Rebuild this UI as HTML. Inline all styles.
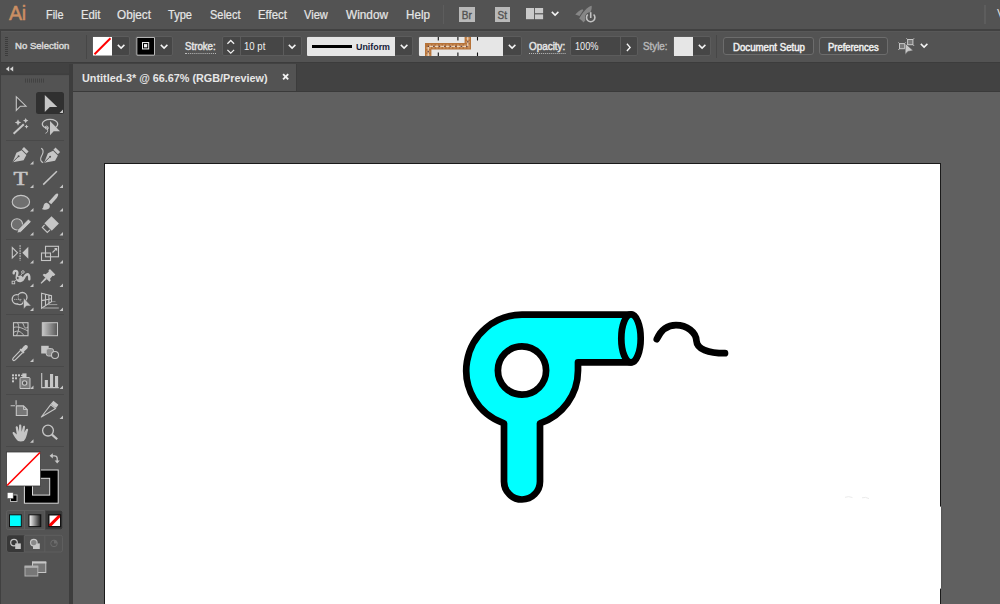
<!DOCTYPE html>
<html><head><meta charset="utf-8"><title>Untitled-3* @ 66.67% (RGB/Preview)</title>
<style>
*{box-sizing:border-box;margin:0;padding:0}
html,body{width:1000px;height:604px;overflow:hidden;background:#606060;font-family:"Liberation Sans",sans-serif;}
#app{position:relative;width:1000px;height:604px;overflow:hidden;background:#606060}
.abs{position:absolute}
#menubar{position:absolute;left:0;top:0;width:1000px;height:29px;background:#535353}
#menubar .mi{position:absolute;top:7.500px;-webkit-text-stroke:0.2px currentColor;font-size:12px;transform-origin:0 50%;color:#e6e6e6;white-space:nowrap;line-height:15px}
#ailogo{position:absolute;left:9px;top:1.400px;font-size:21px;line-height:24px;color:#cb8f63;-webkit-text-stroke:0.55px #cb8f63;letter-spacing:-0.3px;transform-origin:0 0;transform:scaleX(.93)}
#line1{position:absolute;left:0;top:28.700px;width:1000px;height:2.100px;background:#414141}
#ctrl{position:absolute;left:0;top:30.800px;width:1000px;height:31.400px;background:#535353;border-top:1px solid #585858}
#dark2{position:absolute;left:0;top:62px;width:1000px;height:30px;background:#424242;border-top:1.5px solid #3c3c3c}
.ct{position:absolute;font-size:10px;color:#e4e4e4;white-space:nowrap;line-height:12px;transform-origin:0 50%}
.sb{-webkit-text-stroke:0.45px currentColor}
.dd{position:absolute;top:36.300px;height:20px;background:#464646;border:1px solid #5c5c5c;border-radius:2px}
.chev{position:absolute}
#tab{position:absolute;left:72.5px;top:63.5px;width:224.3px;height:27.5px;background:#535353;border-right:0.8px solid #3c3c3c}
#tabtxt{transform-origin:0 50%;position:absolute;left:82px;top:72px;font-size:11px;font-weight:bold;color:#e6e6e6;white-space:nowrap;line-height:13px}
#toolbar{position:absolute;left:0;top:75.300px;width:69px;height:529px;background:#535353}
#toolhead{position:absolute;left:0;top:63.500px;width:69px;height:12px;background:#424242}
#artboard{position:absolute;left:104px;top:163px;width:837px;height:460px;background:#fff;border:1px solid #1a1a1a}
</style></head><body>
<div id="app">
<!-- menubar -->
<div id="menubar">
 <div id="ailogo">Ai</div>
 <span class="mi" style="left:46.2px;transform:scaleX(0.905);">File</span>
 <span class="mi" style="left:80.5px;transform:scaleX(0.943);">Edit</span>
 <span class="mi" style="left:116.7px;transform:scaleX(0.980);">Object</span>
 <span class="mi" style="left:168.0px;transform:scaleX(0.923);">Type</span>
 <span class="mi" style="left:209.5px;transform:scaleX(0.914);">Select</span>
 <span class="mi" style="left:258.0px;transform:scaleX(0.952);">Effect</span>
 <span class="mi" style="left:303.7px;transform:scaleX(0.923);">View</span>
 <span class="mi" style="left:346.0px;transform:scaleX(0.984);">Window</span>
 <span class="mi" style="left:405.5px;transform:scaleX(0.972);">Help</span>

 <div class="abs" style="left:442.800px;top:5px;width:1.600px;height:19px;background:#5d5d5d"></div>
 <div class="abs" style="left:459.100px;top:7.100px;width:16px;height:15.400px;background:#b9b9b9"></div>
 <div class="abs" style="left:461.800px;top:8.700px;font-size:10px;line-height:13px;color:#535353;-webkit-text-stroke:0.35px #535353">Br</div>
 <div class="abs" style="left:494.500px;top:7.100px;width:15.800px;height:15.400px;background:#b9b9b9"></div>
 <div class="abs" style="left:497.500px;top:8.700px;font-size:10px;line-height:13px;color:#535353;-webkit-text-stroke:0.35px #535353">St</div>
 <svg class="abs" style="left:525.900px;top:7.700px" width="18" height="12"><rect x="0" y="0" width="8.100" height="11.200" fill="#cacaca"/><rect x="9" y="0" width="8.100" height="5.200" fill="#cacaca"/><rect x="9" y="6.400" width="8.100" height="4.800" fill="#cacaca"/></svg>
 <svg class="abs" style="left:550.700px;top:10.600px" width="9" height="6"><path d="M0.800 0.900 L4.100 4.100 L7.400 0.900" fill="none" stroke="#f4f4f4" stroke-width="1.500"/></svg>
 <svg class="abs" style="left:574px;top:4px" width="24" height="20" viewBox="0 0 24 20"><path d="M17.700 1.700 C13.500 2.800 8.500 8 5.200 14.600 L9.300 17.800 C14 13.500 18.300 7.500 17.700 1.700 Z" fill="#868686"/><path d="M1.300 10.600 C3.500 7.800 6 6 8.500 5.200 L9.300 6.200 L5.500 12 Z" fill="#868686"/><path d="M8.300 15.800 L9 18.600 L11.800 16.200 Z" fill="#868686"/><circle cx="16.700" cy="13.600" r="5.700" fill="#535353"/><path d="M13.800 10.500 A4.200 4.200 0 1 0 19.600 10.500" fill="none" stroke="#c2c2c2" stroke-width="1.600"/><line x1="16.700" y1="8.200" x2="16.700" y2="14" stroke="#c2c2c2" stroke-width="1.600"/></svg>
 <div class="abs" style="left:984.400px;top:5px;width:1.600px;height:19px;background:#5d5d5d"></div>
 <div class="abs" style="left:997px;top:7px;font-size:12px;line-height:15px;color:#dedede">V</div>
</div>
<div id="line1"></div>
<div id="ctrl"></div>

<!-- control bar contents -->
<svg class="abs" style="left:5px;top:37px" width="4" height="19"><g fill="#3c3c3c"><rect x="0" y="0" width="3" height="1"/><rect x="0" y="2" width="3" height="1"/><rect x="0" y="4" width="3" height="1"/><rect x="0" y="6" width="3" height="1"/><rect x="0" y="8" width="3" height="1"/><rect x="0" y="10" width="3" height="1"/><rect x="0" y="12" width="3" height="1"/><rect x="0" y="14" width="3" height="1"/><rect x="0" y="16" width="3" height="1"/><rect x="0" y="18" width="3" height="1"/></g></svg>
<div class="ct sb" style="left:14.6px;transform:scaleX(1.008);top:40px;color:#d8d8d8;font-weight:normal;font-size:9.500px">No Selection</div>
<div class="abs" style="left:85.500px;top:34.500px;width:1px;height:24px;background:#474747"></div>
<!-- fill swatch -->
<div class="dd" style="left:92px;width:38px"></div>
<svg class="abs" style="left:93px;top:37.300px" width="19" height="18.500" viewBox="0 0 19 18" preserveAspectRatio="none"><rect width="19" height="18" fill="#fff"/><line x1="1.500" y1="16.700" x2="17.500" y2="1.300" stroke="#ff0000" stroke-width="2"/></svg>
<svg class="chev" style="left:116.5px;top:44.200px" width="9" height="6"><path d="M0.800 0.900 L4.100 4.100 L7.400 0.900" fill="none" stroke="#f4f4f4" stroke-width="1.500"/></svg>
<!-- stroke swatch -->
<div class="dd" style="left:135px;width:38px"></div>
<svg class="abs" style="left:136px;top:37.300px" width="19" height="18.500" viewBox="0 0 19 18" preserveAspectRatio="none"><rect x="0.500" y="0" width="18.300" height="18" rx="1" fill="#d8d8d8"/><rect x="1.300" y="0.800" width="16.700" height="16.400" fill="#000"/><rect x="6.500" y="5.400" width="6.200" height="6.200" fill="none" stroke="#f0f0f0" stroke-width="1"/><rect x="8" y="6.900" width="3.200" height="3.200" fill="#f0f0f0"/></svg>
<svg class="chev" style="left:159.7px;top:44.200px" width="9" height="6"><path d="M0.800 0.900 L4.100 4.100 L7.400 0.900" fill="none" stroke="#f4f4f4" stroke-width="1.500"/></svg>
<div class="ct sb" style="left:185.0px;transform:scaleX(0.969);top:40.900px;border-bottom:1px dotted #bdbdbd;padding-bottom:0.300px">Stroke:</div>
<!-- stroke weight -->
<div class="dd" style="left:222px;width:80px"></div>
<div class="abs" style="left:240px;top:37.300px;width:1px;height:18px;background:#5c5c5c"></div>
<div class="abs" style="left:283px;top:37.300px;width:1px;height:18px;background:#5c5c5c"></div>
<svg class="abs" style="left:226px;top:39px" width="10" height="16"><path d="M1.400 4.700 L4.750 1.500 L8.100 4.700 M1.400 10.900 L4.750 14.100 L8.100 10.900" fill="none" stroke="#f0f0f0" stroke-width="1.300"/></svg>
<div class="ct" style="left:243.7px;transform:scaleX(0.957);top:40.900px;font-weight:normal;color:#f0f0f0">10 pt</div>
<svg class="chev" style="left:287.7px;top:44.200px" width="9" height="6"><path d="M0.800 0.900 L4.100 4.100 L7.400 0.900" fill="none" stroke="#f4f4f4" stroke-width="1.500"/></svg>
<!-- width profile -->
<div class="dd" style="left:307px;width:106px"></div>
<div class="abs" style="left:307px;top:37px;width:88px;height:19px;background:#e6e6e6;border-radius:1px 0 0 1px"></div>
<div class="abs" style="left:312.200px;top:45px;width:39.500px;height:3px;background:#000"></div>
<div class="ct" style="left:355.5px;transform:scaleX(0.986);top:40.900px;color:#161a38;font-weight:bold;font-size:9px">Uniform</div>
<svg class="chev" style="left:399.7px;top:44.200px" width="9" height="6"><path d="M0.800 0.900 L4.100 4.100 L7.400 0.900" fill="none" stroke="#f4f4f4" stroke-width="1.500"/></svg>
<!-- brush -->
<div class="dd" style="left:418px;width:104px"></div>
<div class="abs" style="left:419px;top:37px;width:84px;height:19px;background:#e6e6e6;border-radius:1px 0 0 1px"></div>
<svg class="abs" style="left:419px;top:37px" width="84" height="19"><path d="M9.200 19 V9.300 H48.800 V0" fill="none" stroke="#b57238" stroke-width="6.400"/><path d="M9.200 19 V9.300 H48.800 V0" fill="none" stroke="#c98f5c" stroke-width="4.200" stroke-dasharray="2 1.500"/><path d="M9.200 19 V9.300 H48.800 V0" fill="none" stroke="#f4e6d4" stroke-width="1" stroke-dasharray="3.500 2"/><path d="M9.200 19 V9.300 H48.800 V0" fill="none" stroke="#2a2350" stroke-width="1" stroke-dasharray="1 4.500" stroke-dashoffset="-3.800"/><g stroke="#111" stroke-width="1.100"><path d="M19.300 0 V3.500 M38.900 0 V3.500 M58.500 0 V3.500 M19.300 15.500 V19 M38.900 15.500 V19 M58.500 15.500 V19"/></g></svg>
<svg class="chev" style="left:508.4px;top:44.200px" width="9" height="6"><path d="M0.800 0.900 L4.100 4.100 L7.400 0.900" fill="none" stroke="#f4f4f4" stroke-width="1.500"/></svg>
<!-- opacity -->
<div class="ct sb" style="left:528.7px;transform:scaleX(0.989);top:40.900px;border-bottom:1px dotted #bdbdbd;padding-bottom:0.300px">Opacity:</div>
<div class="dd" style="left:570px;width:68px"></div>
<div class="abs" style="left:620px;top:37.300px;width:1px;height:18px;background:#5c5c5c"></div>
<div class="ct" style="left:574.5px;transform:scaleX(0.919);top:40.900px;font-weight:normal;color:#f0f0f0">100%</div>
<svg class="abs" style="left:626px;top:42.500px" width="6" height="10"><path d="M0.900 0.800 L4.100 4.400 L0.900 8" fill="none" stroke="#f4f4f4" stroke-width="1.400"/></svg>
<div class="ct sb" style="left:643.0px;transform:scaleX(0.979);top:41.300px;color:#b6b6b6">Style:</div>
<div class="dd" style="left:673px;width:38px"></div>
<div class="abs" style="left:674px;top:37.200px;width:18.600px;height:18.600px;background:#e6e6e6"></div>
<svg class="chev" style="left:697.7px;top:44.200px" width="9" height="6"><path d="M0.800 0.900 L4.100 4.100 L7.400 0.900" fill="none" stroke="#f4f4f4" stroke-width="1.500"/></svg>
<div class="abs" style="left:716px;top:35px;width:1px;height:23px;background:#474747"></div>
<div class="dd" style="left:723.300px;width:90.500px;top:37.200px;height:18.200px;border-radius:3px;background:#4c4c4c;border-color:#6c6c6c"></div>
<div class="ct sb" style="left:732.5px;transform:scaleX(0.966);top:41.700px;color:#f0f0f0">Document Setup</div>
<div class="dd" style="left:819.400px;width:68.500px;top:37.200px;height:18.200px;border-radius:3px;background:#4c4c4c;border-color:#6c6c6c"></div>
<div class="ct sb" style="left:828.0px;transform:scaleX(0.940);top:41.700px;color:#f0f0f0">Preferences</div>
<svg class="abs" style="left:898px;top:37px" width="18" height="19"><g stroke="#c8c8c8" stroke-width="1" fill="#787878"><rect x="1.500" y="6.600" width="5" height="5.100"/><rect x="9.600" y="2.500" width="5.300" height="5.200"/></g><path d="M1.500 6.600 l-1.200 -1.200 M6.500 6.600 l1.200 -1.200 M1.500 11.700 l-1.200 1.200 M9.600 2.500 l-1.200 -1.200 M14.900 2.500 l1.200 -1.200 M14.900 7.700 l1.200 1.200 M9.600 7.700 l-1.200 1.200" stroke="#c8c8c8" stroke-width="0.900" fill="none"/><path d="M7.200 6.400 V17.400 L9.900 14.400 L15.100 13.600 Z" fill="#c8c8c8" stroke="#535353" stroke-width="0.500"/></svg>
<svg class="chev" style="left:919.7px;top:43.200px" width="9" height="6"><path d="M0.800 0.900 L4.100 4.100 L7.400 0.900" fill="none" stroke="#f4f4f4" stroke-width="1.500"/></svg>
<div id="dark2"></div>
<div id="tab"></div>
<div id="tabtxt" style="left:81.6px;transform:scaleX(0.984);">Untitled-3* @ 66.67% (RGB/Preview)</div>
<svg class="abs" style="left:282.100px;top:73px" width="8" height="8"><path d="M1.100 1.100 L6.200 6.300 M6.200 1.100 L1.100 6.300" stroke="#f2f2f2" stroke-width="1.900" fill="none"/></svg>
<div class="abs" style="left:72px;top:91px;width:928px;height:1.200px;background:#3a3a3a"></div>
<div class="abs" style="left:69px;top:63.500px;width:3.500px;height:541px;background:#3d3d3d"></div>
<div id="toolhead"></div>
<div id="toolbar"></div>
<!--TB-->
<svg class="abs" style="left:0;top:0" width="72" height="604" viewBox="0 0 72 604">
<defs>
<linearGradient id="gr1" x1="0" x2="1" y1="0" y2="0"><stop offset="0" stop-color="#c8c8c8"/><stop offset="1" stop-color="#565656"/></linearGradient>
<linearGradient id="gr2" x1="0" x2="1" y1="0" y2="0"><stop offset="0" stop-color="#ffffff"/><stop offset="1" stop-color="#1a1a1a"/></linearGradient>
<path id="tri" d="M3.500 0 V3.500 H0 Z" fill="#c6c6c6"/>
</defs>
<!-- header arrows -->
<path d="M9.200 66.200 L5.800 68.900 L9.200 71.600 Z M13.200 66.200 L9.800 68.900 L13.200 71.600 Z" fill="#d4d4d4"/>
<rect x="0" y="73.800" width="69" height="1.300" fill="#3f3f3f"/><rect x="0" y="30.500" width="1" height="574" fill="#404040"/>
<!-- grip -->
<g fill="#424242"><rect x="25" y="78.600" width="1" height="4"/><rect x="27" y="78.600" width="1" height="4"/><rect x="29" y="78.600" width="1" height="4"/><rect x="31" y="78.600" width="1" height="4"/><rect x="33" y="78.600" width="1" height="4"/><rect x="35" y="78.600" width="1" height="4"/><rect x="37" y="78.600" width="1" height="4"/><rect x="39" y="78.600" width="1" height="4"/><rect x="41" y="78.600" width="1" height="4"/><rect x="43" y="78.600" width="1" height="4"/></g>
<!-- separators -->
<g fill="#494949"><rect x="6" y="140" width="58" height="1"/><rect x="6" y="239" width="58" height="1"/><rect x="6" y="314" width="58" height="1"/><rect x="6" y="366" width="58" height="1"/><rect x="6" y="394" width="58" height="1"/><rect x="6" y="446" width="58" height="1"/></g>
<!-- selected tool bg -->
<rect x="36" y="92" width="28" height="22" rx="2.500" fill="#303030"/>
<!-- direct selection -->
<path d="M16.300 96.700 V110.300 L20.400 106.200 H26 Z" fill="#484848" stroke="#c6c6c6" stroke-width="1.100" stroke-linejoin="miter"/>
<!-- selection -->
<path d="M44.800 95 V112 L49.800 107 H57.300 Z" fill="#c6c6c6"/>
<use href="#tri" x="59.500" y="109.500"/>
<!-- magic wand -->
<line x1="13.600" y1="133.800" x2="23.800" y2="124.300" stroke="#c6c6c6" stroke-width="2"/>
<path d="M18 119.300 L19 121.500 L21.200 122.500 L19 123.500 L18 125.700 L17 123.500 L14.800 122.500 L17 121.500 Z" fill="#c6c6c6"/>
<path d="M25.700 117.900 L26.600 119.700 L28.400 120.600 L26.600 121.500 L25.700 123.300 L24.800 121.500 L23 120.600 L24.800 119.700 Z" fill="#c6c6c6"/>
<path d="M26.500 124.500 L27.200 125.900 L28.600 126.600 L27.200 127.300 L26.500 128.700 L25.800 127.300 L24.400 126.600 L25.800 125.900 Z" fill="#c6c6c6"/>
<!-- lasso -->
<path d="M48.500 128.300 C44.500 127.900 42.300 126.200 42.300 124.100 C42.300 121.300 45.700 119.400 50 119.400 C54.300 119.400 57.700 121.300 57.700 124.100 C57.700 125.500 57 126.500 55.800 127.300" fill="none" stroke="#c6c6c6" stroke-width="1.300"/>
<circle cx="46.600" cy="127.600" r="1.500" fill="none" stroke="#c6c6c6" stroke-width="1"/>
<path d="M47.500 129 C48 131 47.500 132.500 45.500 133.300" fill="none" stroke="#c6c6c6" stroke-width="1"/>
<path d="M50 121 V135.200 L53.700 131.200 H60 Z" fill="#c6c6c6"/>
<!-- pen -->
<g id="pen"><path d="M12.600 162.200 L16.400 152.800 L21.600 150.300 L26.400 155.100 L23.600 160.300 Z" fill="#c6c6c6"/><path d="M21.900 149.300 L24 147 L28.600 151.600 L26.400 153.800 Z" fill="#c6c6c6"/><path d="M12.900 161.900 L18.300 156.500" stroke="#535353" stroke-width="1" fill="none"/><circle cx="18.600" cy="156.200" r="1" fill="#535353"/></g>
<use href="#tri" x="30" y="161"/>
<!-- curvature pen -->
<use href="#pen" x="31.500" y="0.500"/>
<path d="M41.200 148.200 C44.500 150 42.800 154 41.300 156.500 C40 159 40.500 162 43.200 162.600" fill="none" stroke="#c6c6c6" stroke-width="1.100"/>
<!-- T -->
<text transform="translate(20.700 184.900) scale(1.220 1)" x="0" y="0" font-family="Liberation Serif, serif" font-size="19" fill="#c6c6c6" text-anchor="middle" stroke="#c6c6c6" stroke-width="0.600">T</text>
<use href="#tri" x="30" y="184.500"/>
<!-- line -->
<line x1="43.200" y1="184.600" x2="56.900" y2="171.200" stroke="#c6c6c6" stroke-width="1.500"/>
<use href="#tri" x="59.500" y="184.500"/>
<!-- ellipse -->
<ellipse cx="20.900" cy="201.900" rx="8.700" ry="6.500" fill="#707070" stroke="#c6c6c6" stroke-width="1.100"/>
<use href="#tri" x="30" y="208"/>
<!-- brush -->
<path d="M48.600 202 L55.300 194.600 C56.500 193.400 58 193.300 58.200 194.300 C58.400 195.300 57.500 196.800 56.800 198 L51.200 204.300 Z" fill="#c6c6c6"/>
<path d="M47.200 202.900 C49 203.500 50.200 205.200 49.800 207 C49.300 209 47 209.900 44.500 209.700 C43.500 209.600 42.500 209.400 41.900 209.100 C43.300 208.400 43.200 207 43.600 205.600 C44 203.800 45.500 202.500 47.200 202.900 Z" fill="#c6c6c6"/>
<use href="#tri" x="59.500" y="208"/>
<!-- shaper -->
<circle cx="17" cy="224.400" r="5.600" fill="#707070" stroke="#c6c6c6" stroke-width="1.100"/>
<path d="M17 233 L18 229.400 L28.400 219 L31.200 221.800 L20.800 232.200 Z" fill="#c6c6c6" stroke="#535353" stroke-width="0.700"/>
<use href="#tri" x="30" y="232"/>
<!-- eraser -->
<path d="M51.500 216.200 L58.900 223.600 L51.800 230.700 L44.400 223.300 Z" fill="#c6c6c6"/>
<path d="M44.600 225 L42.300 227.400 L47.300 232.500 L50 229.800" fill="none" stroke="#c6c6c6" stroke-width="1.100"/>
<use href="#tri" x="59.500" y="232"/>
<!-- reflect -->
<path d="M12.300 247.600 V258 L17.500 252.800 Z" fill="none" stroke="#c6c6c6" stroke-width="1.100"/>
<path d="M28.300 246.800 V258.800 L22.300 252.800 Z" fill="#c6c6c6"/>
<line x1="20.100" y1="245.300" x2="20.100" y2="260.800" stroke="#c6c6c6" stroke-width="1.200" stroke-dasharray="1.500 1"/>
<use href="#tri" x="30" y="260"/>
<!-- scale -->
<rect x="45.500" y="246.300" width="13" height="10.500" fill="none" stroke="#c6c6c6" stroke-width="1.100"/>
<rect x="41.500" y="253" width="9" height="7.500" fill="none" stroke="#c6c6c6" stroke-width="1.100"/>
<path d="M52.500 252.500 L56.500 248.500" stroke="#c6c6c6" stroke-width="1.100"/><path d="M54 248 H57.200 V251.200 Z" fill="#c6c6c6"/>
<use href="#tri" x="59.500" y="260"/>
<!-- puppet warp -->
<path d="M13.700 273.400 C13.300 270.300 17.600 269.900 17.400 273 C17.200 275.600 15.800 277.600 17.300 279.800 C19.300 282.300 22.600 281 23.900 278 C25 275.300 27.400 273.300 28.700 275 C29.700 276.400 29.300 278 29.300 279.300" fill="none" stroke="#c6c6c6" stroke-width="2.400" stroke-linecap="round" stroke-linejoin="round"/>
<ellipse cx="19.800" cy="278.600" rx="3.400" ry="2.900" transform="rotate(-30 19.800 278.600)" fill="#c6c6c6"/>
<path d="M20.900 275.500 L22.600 272.600" stroke="#c6c6c6" stroke-width="0.800"/>
<circle cx="17.800" cy="278" r="1.500" fill="#535353" stroke="#c6c6c6" stroke-width="0.800"/>
<circle cx="22.900" cy="272" r="1.300" fill="#535353" stroke="#c6c6c6" stroke-width="0.900"/>
<path d="M14.500 281.500 L16.500 279.500" stroke="#c6c6c6" stroke-width="0.700"/>
<rect x="12.100" y="281.200" width="2.600" height="2.600" fill="#535353" stroke="#c6c6c6" stroke-width="0.900"/>
<use href="#tri" x="30" y="283.500"/>
<!-- pin -->
<g transform="translate(52.500 271.900) rotate(45)" fill="#c6c6c6"><path d="M-3.800 -0.200 H3.800 V1.900 L2.700 2.600 L3.100 6.600 L4.800 7.300 V9.100 H-4.800 V7.300 L-3.100 6.600 L-2.700 2.600 L-3.800 1.900 Z"/><path d="M-1.100 9 H1.100 L0.600 16.300 H-0.600 Z"/></g>
<use href="#tri" x="59.500" y="283.500"/>
<!-- shape builder -->
<g fill="none" stroke="#c6c6c6" stroke-width="2.500"><ellipse cx="16.700" cy="299.300" rx="3.900" ry="4.100"/><circle cx="22.300" cy="297.200" r="4.100"/><circle cx="19.800" cy="300.800" r="3.200"/></g>
<g fill="#535353"><ellipse cx="16.700" cy="299.300" rx="3.800" ry="4"/><circle cx="22.300" cy="297.200" r="4"/><circle cx="19.800" cy="300.800" r="3.100"/></g>
<path d="M18.600 295.600 A4.100 4.100 0 0 0 21.200 301.200" fill="none" stroke="#9a9a9a" stroke-width="0.800"/>
<line x1="14.300" y1="299.400" x2="21.500" y2="299.400" stroke="#c6c6c6" stroke-width="1" stroke-dasharray="1 1"/>
<path d="M23.500 297.800 V309.200 L26.500 306 H31.300 Z" fill="#c6c6c6" stroke="#535353" stroke-width="0.600"/>
<use href="#tri" x="30" y="307.500"/>
<!-- perspective grid -->
<path d="M41.600 293.200 L51.500 295.600 V301.800 L41.600 308.300 Z M41.600 300.600 L51.500 298.800 M45.500 294.200 V305.800 M48.900 295 V303.500" fill="none" stroke="#c6c6c6" stroke-width="1.100"/>
<path d="M52 301.600 H55.500" stroke="#8a8a8a" stroke-width="1"/><path d="M48 304.600 H57.300" stroke="#9c9c9c" stroke-width="1"/><path d="M42.500 308 H58.800" stroke="#b0b0b0" stroke-width="1"/>
<use href="#tri" x="59.500" y="307.500"/>
<!-- mesh -->
<rect x="13.500" y="322.700" width="14.500" height="13" fill="none" stroke="#c6c6c6" stroke-width="1.100"/>
<path d="M13.500 327.500 C18 326 22 328 28 331 M13.500 332.500 C17 330 21 331 24 335.700 M17.500 322.700 C19.500 326 19 330 16.500 335.700 M22.500 322.700 C24.500 326 24 330 28 327" fill="none" stroke="#c6c6c6" stroke-width="0.900"/>
<!-- gradient -->
<rect x="42.300" y="322.700" width="15.200" height="13" fill="url(#gr1)" stroke="#c6c6c6" stroke-width="1"/>
<!-- eyedropper -->
<path d="M20.500 350.300 L13.300 357.800 C12.500 358.800 12.600 359.800 13 360.200 C13.500 360.700 14.500 360.700 15.300 359.900 L22.700 352.500" fill="none" stroke="#c6c6c6" stroke-width="1.200"/>
<path d="M19.500 349.800 L20.800 348.500 L21.500 349 L23.500 346.500 C24.500 345 26.300 344.500 27.300 345.500 C28.300 346.500 27.800 348.300 26.500 349.300 L24 351.500 L24.600 352.300 L23.300 353.600 Z" fill="#c6c6c6"/>
<use href="#tri" x="30" y="358.500"/>
<!-- blend -->
<rect x="41.200" y="345.800" width="7.500" height="7.700" fill="#c6c6c6"/>
<rect x="46.200" y="348.600" width="7.400" height="7.400" rx="2.200" fill="#8a8a8a" stroke="#c6c6c6" stroke-width="1"/>
<circle cx="55" cy="355" r="3.500" fill="#535353" stroke="#c6c6c6" stroke-width="1.100"/>
<!-- symbol sprayer -->
<g fill="#c6c6c6"><rect x="12" y="374.300" width="2" height="2"/><rect x="15" y="374.300" width="2" height="2"/><rect x="18" y="374.300" width="2" height="2"/><rect x="12" y="377.300" width="2" height="2"/><rect x="15" y="377.300" width="2" height="2"/><rect x="12" y="380.300" width="2" height="2"/></g>
<path d="M21 377.500 H29 C29.600 377.500 30 378 30 378.500 V388.500 H20 V378.500 C20 378 20.400 377.500 21 377.500 Z" fill="#7a7a7a" stroke="#c6c6c6" stroke-width="1"/>
<rect x="22.300" y="373.400" width="4.200" height="4" fill="#c6c6c6"/><rect x="21" y="374.800" width="2" height="1.300" fill="#c6c6c6"/>
<circle cx="24.600" cy="383" r="2.200" fill="#535353" stroke="#c6c6c6" stroke-width="1.100"/>
<use href="#tri" x="30" y="385.500"/>
<!-- graph -->
<path d="M41.700 373 V387.600 H58.800" fill="none" stroke="#c6c6c6" stroke-width="1.100"/>
<rect x="44.800" y="380" width="3.100" height="7" fill="#c6c6c6"/><rect x="50" y="374" width="3.100" height="13" fill="#c6c6c6"/><rect x="55" y="376" width="3.100" height="11" fill="#c6c6c6"/>
<use href="#tri" x="59.500" y="385.500"/>
<!-- artboard -->
<path d="M16.100 400.300 V404.800 M10.600 405.800 H15" stroke="#c6c6c6" stroke-width="1.100" fill="none"/>
<path d="M16.300 405.900 H23.500 L27.200 409.500 V415.500 H16.300 Z" fill="#777" stroke="#c6c6c6" stroke-width="1.100"/>
<path d="M23.500 405.900 V409.500 H27.200" fill="none" stroke="#c6c6c6" stroke-width="0.900"/>
<!-- slice -->
<path d="M41.300 417 L50.700 404.700 L55.700 408.600 Z" fill="#565656" stroke="#c6c6c6" stroke-width="1.100" stroke-linejoin="round"/>
<path d="M50.600 403.900 L53.400 400.700 L58.400 404.700 L56 408 Z" fill="#c6c6c6"/>
<use href="#tri" x="59.500" y="415.500"/>
<!-- hand -->
<path d="M18 441 C16 439.500 14.300 436.500 12.700 433.600 C12.100 432.500 13.400 431.600 14.500 432.400 L16.800 434.500 L15.700 427.400 C15.600 426 17.500 425.700 17.800 427 L18.900 431.800 L19.100 425.600 C19.100 424.200 21.200 424.200 21.300 425.600 L21.600 431.800 L23 426.600 C23.400 425.300 25.200 425.700 25 427 L24.300 432.600 L26.100 429.300 C26.800 428.100 28.500 428.900 28.100 430.100 C27 433.500 26.800 438 23.800 441 C22 441.500 19.500 441.500 18 441 Z" fill="#c6c6c6"/>
<use href="#tri" x="30" y="439.300"/>
<!-- zoom -->
<circle cx="48" cy="430.600" r="5.400" fill="none" stroke="#c6c6c6" stroke-width="1.300"/>
<line x1="52" y1="434.600" x2="57.200" y2="439.300" stroke="#c6c6c6" stroke-width="2.200"/>
<!-- fill/stroke -->
<rect x="24.400" y="470" width="33.800" height="33.200" fill="#000" stroke="#dcdcdc" stroke-width="1"/>
<rect x="32.500" y="478.300" width="17.200" height="16.800" fill="#535353" stroke="#dcdcdc" stroke-width="1"/>
<rect x="6.500" y="452" width="34" height="34" fill="#fff" stroke="#3a3a3a" stroke-width="0.800"/>
<line x1="7" y1="485.500" x2="40" y2="452.500" stroke="#f00" stroke-width="1.600"/>
<!-- swap -->
<path d="M52 455.800 H54.500 C56.300 455.800 57.200 456.800 57.200 458.500 V461" fill="none" stroke="#c6c6c6" stroke-width="1.300"/>
<path d="M49.600 455.800 L52.800 453.200 V458.400 Z M57.200 463.600 L54.600 460.400 H59.800 Z" fill="#c6c6c6"/>
<!-- default -->
<rect x="10.500" y="495" width="6.500" height="6.500" fill="#000" stroke="#c6c6c6" stroke-width="0.900"/>
<rect x="7.200" y="492.500" width="6" height="6" fill="#fff" stroke="#535353" stroke-width="0.600"/>
<!-- color buttons -->
<rect x="6.500" y="510.500" width="56" height="19" rx="2" fill="#535353" stroke="#5f5f5f" stroke-width="1"/>
<path d="M44.800 510.500 H60.500 A2 2 0 0 1 62.500 512.500 V527.500 A2 2 0 0 1 60.500 529.500 H44.800 Z" fill="#383838"/>
<line x1="24.500" y1="511" x2="24.500" y2="529" stroke="#5f5f5f"/><line x1="44.800" y1="511" x2="44.800" y2="529" stroke="#5f5f5f"/>
<rect x="9.500" y="514.800" width="11.800" height="11.800" fill="#00ffff" stroke="#111" stroke-width="1"/>
<rect x="29" y="514.800" width="11.800" height="11.800" fill="url(#gr2)" stroke="#111" stroke-width="1"/>
<rect x="48.800" y="514.800" width="11.800" height="11.800" fill="#fff" stroke="#111" stroke-width="1"/>
<path d="M49.300 526.100 L60.100 515.300" stroke="#f00" stroke-width="3" fill="none"/>
<rect x="48.800" y="514.800" width="11.800" height="11.800" fill="none" stroke="#111" stroke-width="1"/>
<!-- draw modes -->
<rect x="7" y="535.300" width="55.500" height="16.700" rx="2" fill="#535353" stroke="#5f5f5f" stroke-width="1"/>
<path d="M24.300 535.300 H9 A2 2 0 0 0 7 537.300 V550 A2 2 0 0 0 9 552 H24.300 Z" fill="#383838"/>
<line x1="24.300" y1="536" x2="24.300" y2="552" stroke="#5f5f5f"/><line x1="44.800" y1="536" x2="44.800" y2="552" stroke="#5f5f5f"/>
<circle cx="14" cy="542.600" r="3.300" fill="none" stroke="#c6c6c6" stroke-width="1.200"/>
<rect x="15.200" y="543.400" width="5.600" height="5.600" fill="#c6c6c6"/>
<rect x="35.800" y="543.400" width="4" height="5.600" fill="#c6c6c6"/><rect x="33" y="546" width="6" height="3" fill="#c6c6c6"/>
<circle cx="33.800" cy="542.600" r="3.300" fill="#888" stroke="#c6c6c6" stroke-width="1.200"/>
<circle cx="54" cy="543.400" r="3.300" fill="none" stroke="#6c6c6c" stroke-width="1"/>
<path d="M54 543.400 V540.100 A3.300 3.300 0 0 1 57.300 543.400 Z" fill="#6c6c6c"/>
<!-- screen mode -->
<rect x="32.500" y="562.500" width="13.300" height="10" fill="#777" stroke="#c6c6c6" stroke-width="1"/>
<rect x="32" y="561.300" width="14.300" height="2.200" fill="#c6c6c6"/>
<rect x="25" y="567" width="12.800" height="9" fill="#777" stroke="#b0b0b0" stroke-width="1"/>
<rect x="24.500" y="565.500" width="13.800" height="2.200" fill="#b0b0b0"/>
</svg>
<!--/TB-->
<div id="artboard"></div>
<svg class="abs" style="left:0;top:0" width="1000" height="604" viewBox="0 0 1000 604">
<path d="M522 314.700 H631 V362.300 H578 V370.500 A55.800 55.800 0 0 1 540 423.300 V481.500 A18 18 0 0 1 504 481.500 V423.300 A55.800 55.800 0 0 1 522 314.700 Z" fill="#00ffff" stroke="#000" stroke-width="6.700" stroke-linejoin="round"/>
<circle cx="522" cy="370.500" r="24.100" fill="#fff" stroke="#000" stroke-width="6.700"/>
<ellipse cx="631" cy="338.400" rx="9.700" ry="24" fill="#00ffff" stroke="#000" stroke-width="6.700"/>
<path d="M656.800 339.200 C661 330 668 325.200 676 325.200 C687 325.200 696 332 696.500 341 C697 349 708 353.200 725 353.200" fill="none" stroke="#000" stroke-width="6.700" stroke-linecap="round"/>
<rect x="940" y="506.600" width="1.300" height="82" fill="#fff"/><rect x="941.200" y="506.600" width="0.900" height="82" fill="#4a4a4a"/>
<path d="M845 497.300 Q848.500 495.800 852.500 497.600 M862 497.800 Q865.500 496.600 869 498.600" fill="none" stroke="#ebebeb" stroke-width="1"/>
</svg>

</div>
</body></html>
